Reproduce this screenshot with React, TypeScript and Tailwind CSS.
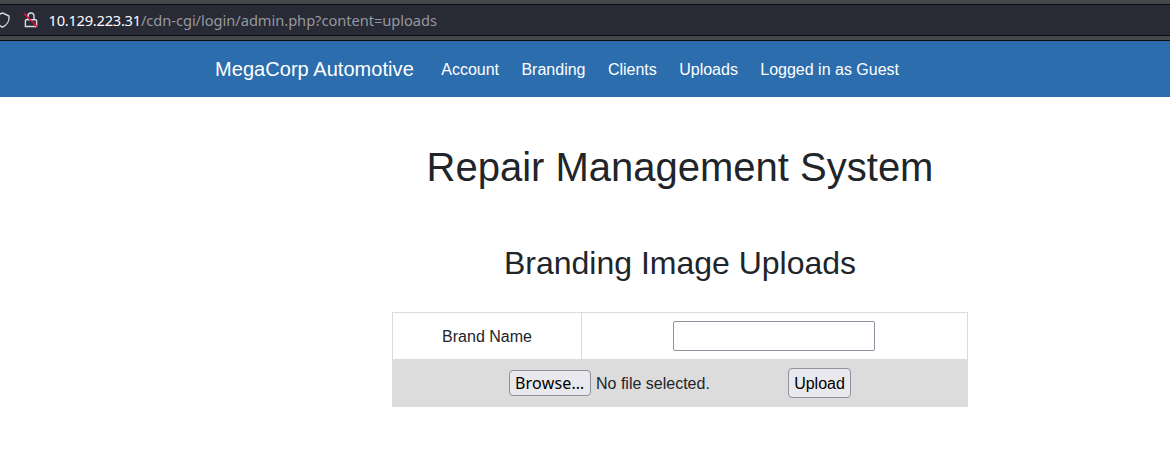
import React from "react";

const links = ["Account", "Branding", "Clients", "Uploads", "Logged in as Guest"];

function AddressBar() {
  return (
    <div className="h-[41px] border-b border-[#0c0c0d] bg-[#45474d] pt-1">
      <div className="flex h-8 items-center border-y border-[#0c0c0d] bg-[#282a36] font-['Noto_Sans',sans-serif] text-[14.67px] whitespace-pre">
        <svg className="-ml-1.5 h-4 w-4 shrink-0" viewBox="0 0 16 16" fill="none" stroke="#dcdcde" strokeWidth="1.4">
          <path d="M8.5 .8 14.9 4C15.6 8.5 13 13 8.5 15.2C4 13 1.8 8.5 2.3 4Z" strokeLinejoin="round" />
        </svg>
        <svg className="ml-[13px] h-4 w-4 shrink-0" viewBox="0 0 16 16" fill="none">
          <path d="M5 7.7V4a3 3 0 0 1 6 0V7.7M3.2 7.7h9.6a.8 .8 0 0 1 .8 .8v6h-11.2v-6a.8 .8 0 0 1 .8-.8Z" stroke="#dcdcde" strokeWidth="1.4" />
          <path d="M1 1.5 14.5 15" stroke="#e5103f" strokeWidth="1.5" />
        </svg>
        <span className="ml-[9.5px] tracking-[-0.25px] text-[#fbfbfe]">10.129.223.31</span>
        <span className="tracking-[-0.045px] text-[#97989d]">/cdn-cgi/login/admin.php?content=uploads</span>
      </div>
    </div>
  );
}

function NavBar() {
  return (
    <nav className="flex h-14 items-center bg-[#2b6dad] pl-[215px] text-white">
      <a className="mr-[27.4px] text-xl tracking-[0.05px]">MegaCorp Automotive</a>
      <div className="flex gap-[22.4px] pt-px">
        {links.map((l) => (
          <a key={l}>{l}</a>
        ))}
      </div>
    </nav>
  );
}

export default function App() {
  return (
    <div className="h-[459px] overflow-hidden bg-white font-['Liberation_Sans',Arial,sans-serif] text-base text-[#212529]">
      <AddressBar />
      <NavBar />
      <main className="ml-[392px] flex w-[576px] flex-col items-center">
        <h1 className="mt-[46px] text-[40px] leading-[48px]">Repair Management System</h1>
        <h2 className="mt-[53px] text-[32px] leading-[38px]">Branding Image Uploads</h2>
        <form className="mt-[30px] w-full border border-[#dcdcdc]">
          <div className="flex h-[46px]">
            <label className="flex w-[189px] items-center justify-center border-r border-[#dcdcdc] pt-0.5">Brand Name</label>
            <div className="flex flex-1 items-center justify-center pr-0.5">
              <input type="text" className="h-[30px] w-[202px] rounded-[2px] border border-[#8f8f9d] bg-white px-1 outline-none" />
            </div>
          </div>
          <div className="flex h-[47px] items-center bg-[#dcdcdc] pl-[116px]">
            <button type="button" className="h-[26px] w-[82px] rounded border border-[#8f8f9d] bg-[#e9e9ed] pl-[5px] text-left font-['Noto_Sans',sans-serif] text-base leading-6 tracking-[0.2px] text-black">Browse…</button>
            <span className="ml-[5px] w-48 pt-0.5">No file selected.</span>
            <button type="button" className="h-[30px] w-[63px] rounded border border-[#8f8f9d] bg-[#e9e9ed] pt-0.5 text-black">Upload</button>
          </div>
        </form>
      </main>
    </div>
  );
}
